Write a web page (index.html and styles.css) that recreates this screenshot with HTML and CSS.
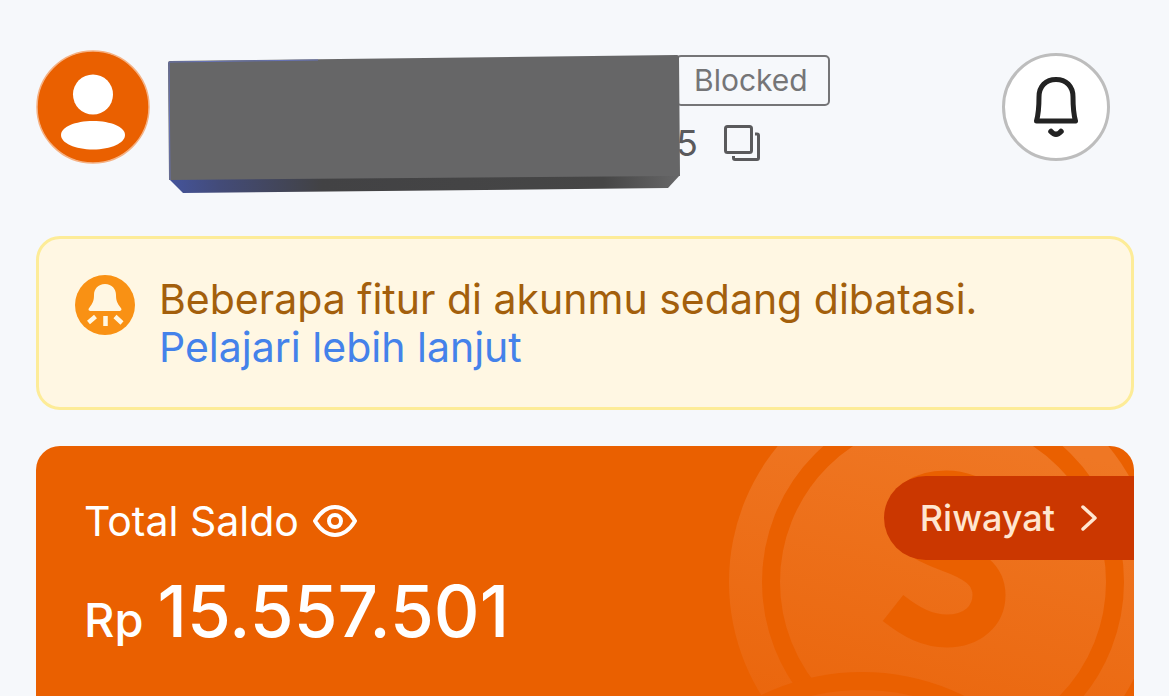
FILE: index.html
```html
<!DOCTYPE html>
<html lang="id">
  <head>
    <meta charset="UTF-8" />
    <meta name="viewport" content="width=device-width, initial-scale=1.0" />
    <title>Total Saldo</title>
    <link rel="stylesheet" href="styles.css">
  </head>
  <body>
    <header class="header">
      <svg class="avatar" viewBox="0 0 114 114" aria-hidden="true">
        <circle cx="57" cy="57" r="56" fill="#ea6000" stroke="#f5b183" stroke-width="1.5" />
        <circle cx="57" cy="44.500" r="20" fill="#fff" />
        <path d="M25 85c0-8 14-14 32-14s32 6 32 14-14 14.500-32 14.500S25 93 25 85z" fill="#fff" />
      </svg>

      <svg class="cover" viewBox="0 0 512 138" preserveAspectRatio="none" aria-hidden="true">
        <defs>
          <linearGradient id="cover-side">
            <stop offset="0" stop-color="#44549c" />
            <stop offset="0.100" stop-color="#434b78" />
            <stop offset="0.300" stop-color="#424244" />
            <stop offset="0.850" stop-color="#464646" />
            <stop offset="1" stop-color="#676768" />
          </linearGradient>
        </defs>
        <path d="M1 124L512 120L500 133L15 138z" fill="url(#cover-side)" />
        <path d="M2 6Q0 6 0 8L1 125L512 121L511 2Q511 0 509 0z" fill="#666667" />
        <path d="M150 5L1 7L2 125" fill="none" stroke="#6672b5" stroke-width="1" />
      </svg>

      <div class="account">
        <span class="badge">Blocked</span>
        <div class="number">
          <span>5</span>
          <button class="copy-btn" aria-label="Salin">
            <svg viewBox="0 0 38 38" width="38" height="38" fill="none" stroke="#5a5a5c" stroke-width="3">
              <rect x="2.500" y="2.500" width="26" height="26" rx="2" />
              <path d="M32 10h2q1.500 0 1.500 1.500V34q0 1.500-1.500 1.500H12q-1.500 0-1.500-1.500v-2" />
            </svg>
          </button>
        </div>
      </div>

      <button class="bell-btn" aria-label="Notifikasi">
        <svg viewBox="0 0 50 64" width="50" height="64" fill="none" stroke="#222" stroke-width="5" stroke-linecap="round" stroke-linejoin="round">
          <path d="M5.500 46C8 37 8 30 8 22C8 11 15 4.500 25 4.500s17 6.500 17 17.500c0 8 0 15 2.500 24z" />
          <path d="M20 56.500q5 5.500 10 0" stroke-width="5.500" />
        </svg>
      </button>
    </header>

    <main>
      <section class="notice">
        <svg class="notice-icon" viewBox="0 0 60 60" aria-hidden="true">
          <circle cx="30" cy="30" r="30" fill="#f99114" />
          <path d="M30 9c-7 0-11 5-11 11 0 6-1.500 8.500-4.500 12.500C12.500 35 14 36 16 36h28c2 0 3.500-1 1.500-3.500C42.500 28.500 41 26 41 20c0-6-4-11-11-11z" fill="#fff7e3" />
          <path d="M20.500 41.500L13.500 47.500M30.500 41v10M40 41.500l7 6.500" stroke="#fff7e3" stroke-width="4.500" />
        </svg>
        <p>Beberapa fitur di akunmu sedang dibatasi.<br /><a href="#">Pelajari lebih lanjut</a></p>
      </section>

      <section class="balance">
        <svg class="coins" viewBox="0 0 420 672" aria-hidden="true">
          <defs>
            <linearGradient id="shine" gradientUnits="userSpaceOnUse" x1="330" y1="0" x2="250" y2="330">
              <stop offset="0" stop-color="#ef7724" />
              <stop offset="1" stop-color="#ea650b" />
            </linearGradient>
          </defs>
          <g fill="none" stroke="#ea6000">
            <circle cx="229" cy="136" r="214" fill="url(#shine)" stroke="none" />
            <circle cx="229" cy="136" r="172" stroke-width="18" />
            <!-- emblem in the middle of the coin -->
            <path d="M179 162C198 177 214 185 233 185C258 185 275 170 275 149C275 128 258 118 233 109C206 99 190 90 190 71C190 52 207 41 232 41C248 41 263 47 276 58" stroke-width="33" />
          </g>
          <circle cx="148" cy="458" r="232" fill="#ea6000" />
          <circle cx="148" cy="458" r="214" fill="#eb660d" />
        </svg>

        <div class="balance-top">
          <div class="balance-label">
            <span>Total Saldo</span>
            <button class="eye-btn" aria-label="Sembunyikan saldo">
              <svg viewBox="0 0 44 34" width="44" height="34" fill="none" stroke="#fff" stroke-width="4" stroke-linejoin="round">
                <path d="M2 17C8 7 14 3 22 3s14 4 20 14c-6 10-12 14-20 14S8 27 2 17z" />
                <circle cx="22" cy="17" r="6" />
              </svg>
            </button>
          </div>
          <button class="history-btn">
            Riwayat
            <svg viewBox="0 0 16 26" width="16" height="26" fill="none" stroke="#ffe6d0" stroke-width="3.5" stroke-linecap="round" stroke-linejoin="round">
              <path d="M2 2l12 11L2 24" />
            </svg>
          </button>
        </div>

        <div class="amount"><span class="currency">Rp</span><span>15.557.501</span></div>
      </section>
    </main>
  </body>
</html>
```

FILE: styles.css
```css
* {
  box-sizing: border-box;
}

body {
  display: flex;
  flex-direction: column;
  min-height: 100vh;
  margin: 0;
  padding: 50px 35px 0 36px;
  background-color: #f6f8fb;
  font-family: Inter, "Liberation Sans", sans-serif;
}

button {
  padding: 0;
  border: none;
  background: none;
  font-family: inherit;
  cursor: pointer;
}

svg {
  display: block;
  flex-shrink: 0;
}

/* Header */
.header {
  display: flex;
  align-items: flex-start;
  margin-bottom: 36px;
}

.avatar {
  width: 114px;
  height: 114px;
}

.cover {
  position: relative;
  z-index: 1;
  flex: 0 1 512px;
  height: 138px;
  margin: 5px 0 7px 18px;
}

.account {
  margin: 5px auto 0 -4px;
}

.badge {
  display: block;
  padding: 0 20px 0 16px;
  border: 2px solid #757577;
  border-radius: 5px;
  color: #757577;
  font-size: 30px;
  line-height: 47px;
}

.number {
  display: flex;
  align-items: center;
  gap: 25px;
  margin-top: 17px;
  color: #5a5a5c;
  font-size: 36px;
  line-height: 40px;
}

.bell-btn {
  display: flex;
  align-items: center;
  justify-content: center;
  width: 108px;
  height: 108px;
  margin: 3px 24px 0 0;
  border: 3px solid #bdbdbd;
  border-radius: 50%;
  background-color: #fff;
}

/* Main */
main {
  display: flex;
  flex: 1;
  flex-direction: column;
  gap: 36px;
}

.notice {
  display: flex;
  gap: 24px;
  padding: 36px;
  border: 3px solid #fdec98;
  border-radius: 24px;
  background-color: #fff7e3;
  color: #a35f0c;
  font-size: 41px;
  line-height: 48px;
}

.notice-icon {
  width: 60px;
  height: 60px;
}

.notice p {
  margin: 0;
}

.notice a {
  color: #4482ea;
  text-decoration: none;
}

.balance {
  position: relative;
  flex: 1;
  overflow: hidden;
  padding: 30px 0 36px 48px;
  border-radius: 24px 24px 0 0;
  background-color: #ea6000;
  color: #fff;
}

/* Coins behind the balance */
.coins {
  position: absolute;
  top: 0;
  right: 0;
  width: 420px;
  height: 672px;
}

.balance-top {
  position: relative;
  display: flex;
  align-items: center;
  justify-content: space-between;
}

.balance-label {
  display: flex;
  align-items: center;
  gap: 14px;
  padding-top: 6px;
  font-size: 41px;
  line-height: 48px;
}

.history-btn {
  display: flex;
  align-items: center;
  gap: 26px;
  height: 84px;
  padding: 0 37px 0 36px;
  border-radius: 42px 0 0 42px;
  background-color: #cb3700;
  color: #ffe6d0;
  font-size: 36px;
  font-weight: 500;
}

.amount {
  position: relative;
  display: flex;
  align-items: baseline;
  gap: 14px;
  margin-top: 9px;
  font-size: 71px;
  font-weight: 500;
  line-height: 84px;
}

.currency {
  font-size: 47px;
}
```
